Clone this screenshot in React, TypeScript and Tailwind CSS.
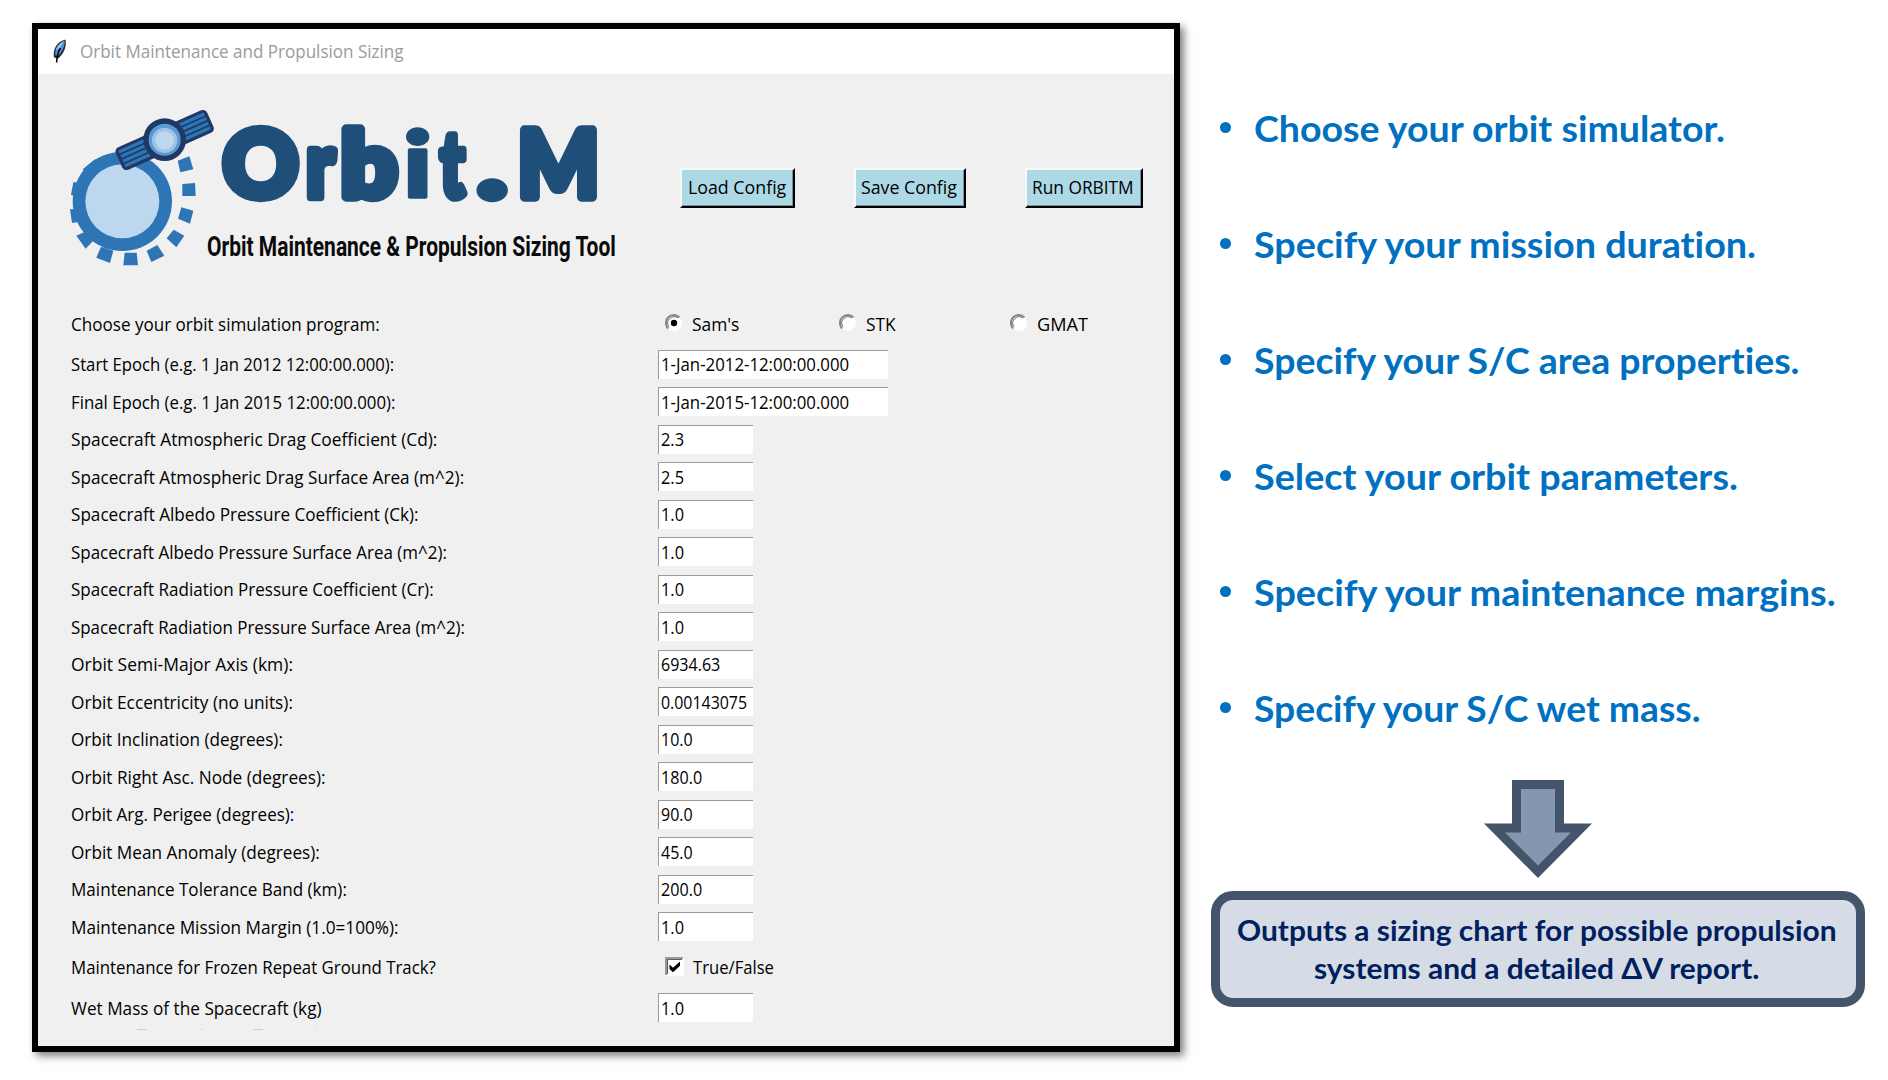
import { useLayoutEffect, useRef, useState } from "react";

/* One line of text stretched or squeezed to a given width. */
function Fit({ w, children }: { w: number; children: string }) {
  const ref = useRef<HTMLSpanElement>(null);
  const [scale, setScale] = useState(1);
  useLayoutEffect(() => {
    if (ref.current) setScale(w / ref.current.offsetWidth);
  }, [w]);
  return (
    <span className="block whitespace-nowrap" style={{ width: w }}>
      <span ref={ref} className="inline-block origin-left" style={{ transform: `scaleX(${scale})` }}>
        {children}
      </span>
    </span>
  );
}

const NARROW = "w-[95px]";
const WIDE = "w-[230px]";

type Field = { label: string; lw: number; value: string; vw: number; wide?: boolean };

const fields: Field[] = [
  { label: "Start Epoch (e.g. 1 Jan 2012 12:00:00.000):", lw: 323, value: "1-Jan-2012-12:00:00.000", vw: 188, wide: true },
  { label: "Final Epoch (e.g. 1 Jan 2015 12:00:00.000):", lw: 324, value: "1-Jan-2015-12:00:00.000", vw: 188, wide: true },
  { label: "Spacecraft Atmospheric Drag Coefficient (Cd):", lw: 366, value: "2.3", vw: 23 },
  { label: "Spacecraft Atmospheric Drag Surface Area (m^2):", lw: 393, value: "2.5", vw: 23 },
  { label: "Spacecraft Albedo Pressure Coefficient (Ck):", lw: 348, value: "1.0", vw: 23 },
  { label: "Spacecraft Albedo Pressure Surface Area (m^2):", lw: 376, value: "1.0", vw: 23 },
  { label: "Spacecraft Radiation Pressure Coefficient (Cr):", lw: 363, value: "1.0", vw: 23 },
  { label: "Spacecraft Radiation Pressure Surface Area (m^2):", lw: 394, value: "1.0", vw: 23 },
  { label: "Orbit Semi-Major Axis (km):", lw: 222, value: "6934.63", vw: 59 },
  { label: "Orbit Eccentricity (no units):", lw: 222, value: "0.00143075", vw: 86 },
  { label: "Orbit Inclination (degrees):", lw: 212, value: "10.0", vw: 32 },
  { label: "Orbit Right Asc. Node (degrees):", lw: 255, value: "180.0", vw: 41 },
  { label: "Orbit Arg. Perigee (degrees):", lw: 223, value: "90.0", vw: 32 },
  { label: "Orbit Mean Anomaly (degrees):", lw: 249, value: "45.0", vw: 32 },
  { label: "Maintenance Tolerance Band (km):", lw: 276, value: "200.0", vw: 41 },
  { label: "Maintenance Mission Margin (1.0=100%):", lw: 328, value: "1.0", vw: 23 },
];

const bullets = [
  { text: "Choose your orbit simulator.", w: 471 },
  { text: "Specify your mission duration.", w: 502 },
  { text: "Specify your S/C area properties.", w: 546 },
  { text: "Select your orbit parameters.", w: 484 },
  { text: "Specify your maintenance margins.", w: 582 },
  { text: "Specify your S/C wet mass.", w: 447 },
];

function Entry({ value, vw, wide }: { value: string; vw: number; wide?: boolean }) {
  return (
    <div
      className={`flex h-[29px] items-center border-t-[1.5px] border-l-[1.5px] border-[#9b9b9b] bg-white pb-px pl-0.5 ${wide ? WIDE : NARROW}`}
    >
      <Fit w={vw}>{value}</Fit>
    </div>
  );
}

function FieldRow({ label, lw, value, vw, wide }: Field) {
  return (
    <div className="flex h-[37.5px] shrink-0 items-center">
      <div className="w-[587px]">
        <Fit w={lw}>{label}</Fit>
      </div>
      <Entry value={value} vw={vw} wide={wide} />
    </div>
  );
}

function Radio({ checked }: { checked?: boolean }) {
  return (
    <svg className="mb-0.5 size-[18px]" viewBox="0 0 18 18">
      <circle cx="9" cy="9" r="8" fill="#fff" />
      <path d="M3.200 14.500A7.700 7.700 0 0 1 14.500 3.400" fill="none" stroke="#858585" strokeWidth="2" />
      <path d="M3.800 12.600A6.400 6.400 0 0 1 12.800 3.900" fill="none" stroke="#666" strokeWidth="1" />
      {checked && <circle cx="9" cy="9" r="3.2" fill="#000" />}
    </svg>
  );
}

function PushButton({ children, w, className }: { children: string; w: number; className: string }) {
  return (
    <button
      className={`flex h-10 items-center justify-center border-2 border-t-[#f4fbfd] border-r-black border-b-black border-l-[#f4fbfd] bg-[#add8e6] pr-0.5 pb-0.5 shadow-[inset_-1px_-1px_0_#74929b] ${className}`}
    >
      <Fit w={w}>{children}</Fit>
    </button>
  );
}

function Feather() {
  return (
    <svg className="h-[26px] w-4" viewBox="0 0 16 26">
      <path d="M2 19.500C0.500 12 4 4 13.500 1.500C15 9 11 17 6 20.500Z" fill="#2b2b2b" />
      <path d="M3.300 17C2.500 11 6 5.300 12.700 2.800C13 9 9.500 15 5.500 18.500Z" fill="#4b8fdc" />
      <path d="M3.800 12C6 7 8.500 5 12 3.400L8 10Z" fill="#9cc4ee" />
      <path d="M8.500 10C6.500 13 5 17 4.600 24.500" fill="none" stroke="#050505" strokeWidth="1.500" />
    </svg>
  );
}

const blocks = [
  "383,212 418,199 430,238 391,247",
  "397,282 435,279 437,318 397,318",
  "394,352 430,362 420,401 384,386",
  "371,419 403,437 379,472 350,445",
  "290,482 322,465 343,497 304,516",
  "224,488 260,488 264,526 220,526",
  "153,470 190,482 180,519 139,503",
  "79,437 105,425 132,450 107,476",
  "60,358 82,357 90,395 66,399",
  "70,276 90,280 84,318 63,315",
  "98,238 135,208 150,215 110,250",
];

const letters = [
  { c: "O", x: 519, w: 226, s: 28 },
  { c: "r", x: 768, w: 86, s: 26 },
  { c: "b", x: 872, w: 170, s: 28 },
  { c: "i", x: 1059, w: 88, s: 10 },
  { c: "t", x: 1170, w: 74, s: 26 },
  { c: ".", x: 1284, w: 85, s: 28 },
  { c: "M", x: 1403, w: 244, s: 28 },
];

function Emblem() {
  return (
    <svg className="h-[190px] w-[150px] shrink-0 overflow-visible" viewBox="0 0 450 570">
      <g fill="#2e75b6">
        {blocks.map((p) => (
          <polygon key={p} points={p} />
        ))}
        <circle cx="217" cy="334" r="149" />
      </g>
      <circle cx="217" cy="334" r="111" fill="#bdd7ee" />
      <g transform="translate(344 150) rotate(-24)">
        <rect x="-150" y="-37" width="300" height="74" rx="14" fill="#1f3864" />
        <g fill="#2e75b6">
          {[-28, -13, 2, 17].map((y) => (
            <rect key={y} x="-140" y={y} width="280" height="10" />
          ))}
        </g>
      </g>
      <circle cx="344" cy="149" r="64" fill="#1f3864" />
      <circle cx="344" cy="149" r="48" fill="#5b9bd5" />
      <circle cx="344" cy="151" r="38" fill="#9dc3e6" />
      <circle cx="344" cy="151" r="28" fill="#bdd7ee" />
    </svg>
  );
}

function Logo() {
  return (
    <div className="flex h-[190px] w-[600px] shrink-0">
      <Emblem />
      <div className="flex flex-col">
        <svg className="h-[137px] w-[450px]" viewBox="450 0 1350 411">
          <g
            fill="#1f4e79"
            stroke="#1f4e79"
            strokeLinejoin="round"
            fontSize="277"
            className="font-[Lato,sans-serif] font-black"
          >
            {letters.map((l) => (
              <text key={l.c} x={l.x} y="320" strokeWidth={l.s} textLength={l.w} lengthAdjust="spacingAndGlyphs">
                {l.c}
              </text>
            ))}
          </g>
        </svg>
        <div className="mt-[6px] pl-[7px] font-[Roboto,sans-serif] text-[28px] leading-7 font-bold text-[#0a0a0a]">
          <Fit w={409}>Orbit Maintenance &amp; Propulsion Sizing Tool</Fit>
        </div>
      </div>
    </div>
  );
}

export default function App() {
  return (
    <div className="flex h-[1080px] w-[1888px] overflow-hidden bg-white pt-[23px] pl-8">
      <div className="flex h-[1029px] w-[1148px] shrink-0 flex-col border-6 border-black bg-[#f0f0f0] font-['Open_Sans',sans-serif] text-[18.5px] leading-6 text-black shadow-[4px_4px_8px_rgba(0,0,0,0.5)]">
        <div className="flex h-[45px] shrink-0 items-center bg-white pb-0.5 pl-[14px] text-[#9b9b9b]">
          <Feather />
          <div className="ml-3">
            <Fit w={324}>Orbit Maintenance and Propulsion Sizing</Fit>
          </div>
        </div>

        <div className="flex h-[228px] shrink-0 pt-4 pl-3">
          <Logo />
          <div className="flex pt-[78px] pl-[30px]">
            <PushButton w={98} className="w-[115px]">Load Config</PushButton>
            <PushButton w={96} className="ml-[59px] w-28">Save Config</PushButton>
            <PushButton w={102} className="ml-[59px] w-[118px]">Run ORBITM</PushButton>
          </div>
        </div>

        <div className="flex flex-col pl-[33px]">
          <div className="flex h-[43.5px] shrink-0 items-center">
            <div className="w-[594px]">
              <Fit w={309}>Choose your orbit simulation program:</Fit>
            </div>
            <div className="flex w-[174px] items-center gap-[9px]">
              <Radio checked />
              <Fit w={47}>Sam's</Fit>
            </div>
            <div className="flex w-[171px] items-center gap-[9px]">
              <Radio />
              <Fit w={30}>STK</Fit>
            </div>
            <div className="flex items-center gap-[9px]">
              <Radio />
              <Fit w={51}>GMAT</Fit>
            </div>
          </div>

          {fields.map((f) => (
            <FieldRow key={f.label} {...f} />
          ))}

          <div className="flex h-[43.5px] shrink-0 items-center">
            <div className="w-[594px]">
              <Fit w={365}>Maintenance for Frozen Repeat Ground Track?</Fit>
            </div>
            <div className="flex items-center gap-[9px]">
              <svg className="mb-0.5 size-[19px]" viewBox="0 0 19 19">
                <rect width="19" height="19" fill="#fff" />
                <path d="M1 18V1H18" fill="none" stroke="#9a9a9a" strokeWidth="2" />
                <path d="M2.500 17V2.500H17" fill="none" stroke="#606060" strokeWidth="1.200" />
                <path d="M4.500 7.500L8 10.800L15 4.500V8.800L8 15.200L4.500 12Z" fill="#000" />
              </svg>
              <Fit w={81}>True/False</Fit>
            </div>
          </div>

          <FieldRow label="Wet Mass of the Spacecraft (kg)" lw={251} value="1.0" vw={23} />

          <div className="mt-0.5 flex pl-[66px]">
            <div className="h-px w-2.5 bg-[#cfcfcf]" />
            <div className="ml-[52px] h-px w-1 bg-[#dedede]" />
            <div className="ml-[50px] h-px w-2.5 bg-[#cfcfcf]" />
            <div className="ml-[52px] h-px w-0.5 bg-[#dedede]" />
          </div>
        </div>
      </div>

      <div className="ml-[31px] flex w-[654px] shrink-0 flex-col font-[Lato,sans-serif] font-bold [font-variant-ligatures:none]">
        <ul className="flex flex-col pt-[47px] text-[36px] leading-[116px] text-[#0070c0]">
          {bullets.map((b) => (
            <li key={b.text} className="flex h-[116px] items-center pl-[9px]">
              <span className="mr-[23px] mb-px size-[11px] rounded-full bg-[#0070c0]" />
              <Fit w={b.w}>{b.text}</Fit>
            </li>
          ))}
        </ul>

        <div className="flex flex-col items-center pt-[14px]">
          <svg className="h-[98px] w-[108px]" viewBox="0 0 108 98">
            <path d="M28 0H80V43.500H108L54 98L0 43.500H28Z" fill="#44546a" />
            <path d="M37 9H71V52.500H87L54 85.500L21 52.500H37Z" fill="#8497b0" />
          </svg>
        </div>

        <div className="mt-[13px] flex h-[116px] flex-col items-center justify-center rounded-[22px] border-9 border-[#44546a] bg-[#d6dce5] pr-0.5 pb-px text-[29px] leading-[38px] text-[#002060]">
          <Fit w={600}>Outputs a sizing chart for possible propulsion</Fit>
          <Fit w={446}>systems and a detailed ΔV report.</Fit>
        </div>
      </div>
    </div>
  );
}
